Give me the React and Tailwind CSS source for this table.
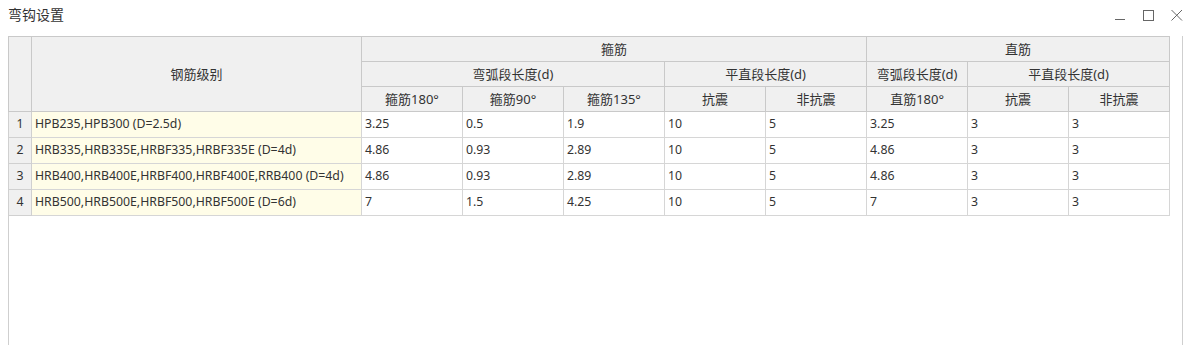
import React from 'react';

const rows = [
  { no: 1, name: 'HPB235,HPB300 (D=2.5d)', vals: ['3.25', '0.5', '1.9', '10', '5', '3.25', '3', '3'] },
  { no: 2, name: 'HRB335,HRB335E,HRBF335,HRBF335E (D=4d)', vals: ['4.86', '0.93', '2.89', '10', '5', '4.86', '3', '3'] },
  { no: 3, name: 'HRB400,HRB400E,HRBF400,HRBF400E,RRB400 (D=4d)', vals: ['4.86', '0.93', '2.89', '10', '5', '4.86', '3', '3'] },
  { no: 4, name: 'HRB500,HRB500E,HRBF500,HRBF500E (D=6d)', vals: ['7', '1.5', '4.25', '10', '5', '7', '3', '3'] },
];

const th = 'border border-[#c9c9c9] bg-[#f0f0f0] font-normal text-center h-[25px] p-0 text-[13px]';
const td = 'border border-[#d6d6d6] h-[26px] px-[3px] py-0 text-left whitespace-nowrap text-[12.3px]';

export default function App() {
  return (
    <div
      className="w-[1185px] h-[345px] bg-white text-[#333] overflow-hidden flex flex-col"
      style={{ fontFamily: '"Noto Sans", "Noto Sans CJK SC", sans-serif' }}
    >
      <div className="h-[36px] flex items-start justify-between pl-[8px] pr-[2px] pt-[5px]">
        <span className="text-[14px] leading-[20px]">弯钩设置</span>
        <div className="flex items-center gap-[17px] mt-[4px] text-[#666]">
          <svg width="11" height="12" viewBox="0 0 11 12"><path d="M0 10.5h10" stroke="currentColor" strokeWidth="1" /></svg>
          <svg width="11" height="12" viewBox="0 0 11 12"><rect x="0.5" y="1.5" width="10" height="10" fill="none" stroke="currentColor" /></svg>
          <svg width="12" height="12" viewBox="0 0 12 12"><path d="M0.5 1L11 11.5M11 1L0.5 11.5" stroke="currentColor" strokeWidth="1" /></svg>
        </div>
      </div>
      <div className="flex-1 ml-[8px] mr-[2px] border-l border-r border-[#cfcfcf]">
        <table className="table-fixed border-collapse w-[1162px] -ml-px leading-none">
          <colgroup>
            <col className="w-[23px]" />
            <col className="w-[330px]" />
            {Array.from({ length: 8 }).map((_, i) => (
              <col key={i} className="w-[101px]" />
            ))}
          </colgroup>
          <thead>
            <tr>
              <th rowSpan={3} className={th}></th>
              <th rowSpan={3} className={th}>钢筋级别</th>
              <th colSpan={5} className={th}>箍筋</th>
              <th colSpan={3} className={th}>直筋</th>
            </tr>
            <tr>
              <th colSpan={3} className={th}>弯弧段长度(d)</th>
              <th colSpan={2} className={th}>平直段长度(d)</th>
              <th className={th}>弯弧段长度(d)</th>
              <th colSpan={2} className={th}>平直段长度(d)</th>
            </tr>
            <tr>
              <th className={th}>箍筋180°</th>
              <th className={th}>箍筋90°</th>
              <th className={th}>箍筋135°</th>
              <th className={th}>抗震</th>
              <th className={th}>非抗震</th>
              <th className={th}>直筋180°</th>
              <th className={th}>抗震</th>
              <th className={th}>非抗震</th>
            </tr>
          </thead>
          <tbody>
            {rows.map((r) => (
              <tr key={r.no}>
                <td className="border border-[#d0d0d0] bg-[#f0f0f0] h-[26px] p-0 text-center text-[12.3px]">{r.no}</td>
                <td className={`${td} bg-[#fffde8]`}>{r.name}</td>
                {r.vals.map((v, i) => (
                  <td key={i} className={td}>{v}</td>
                ))}
              </tr>
            ))}
          </tbody>
        </table>
      </div>
    </div>
  );
}
